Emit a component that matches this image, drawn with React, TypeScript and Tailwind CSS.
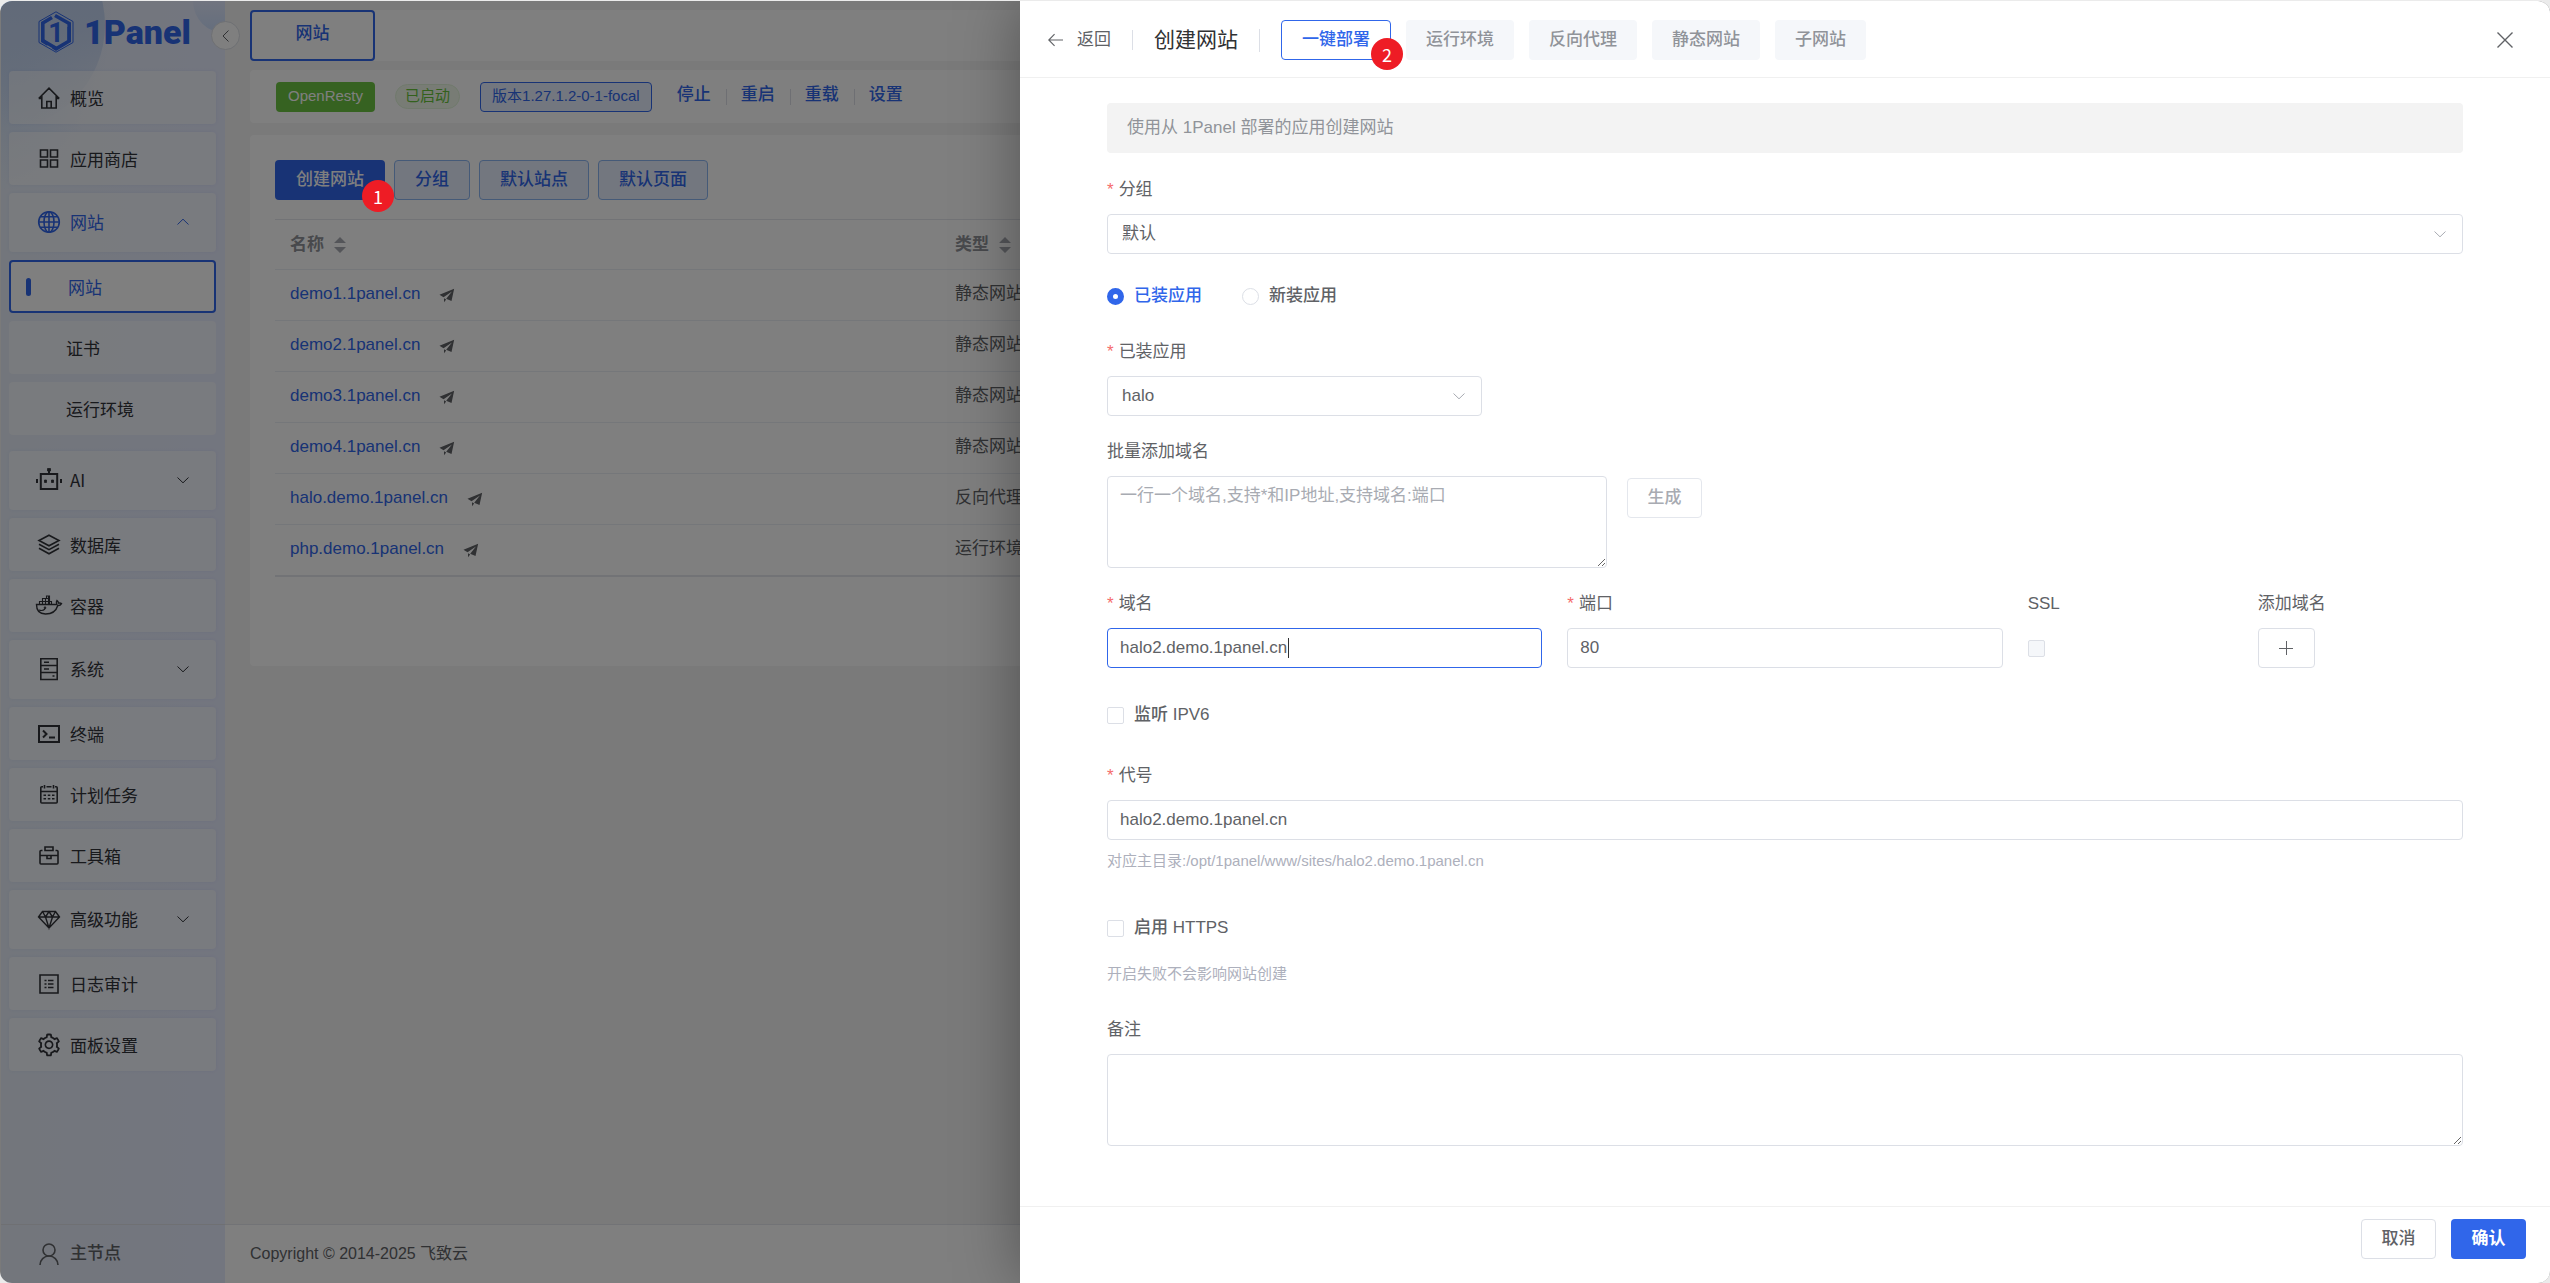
import React from "react";
import { AiOutlineSetting } from "react-icons/ai";

const FONT = "font-['Liberation_Sans','Noto_Sans_CJK_SC',sans-serif]";

function Svg({ children, size = 22, className = "" }: { children: React.ReactNode; size?: number; className?: string }) {
  return (
    <svg
      width={size}
      height={size}
      viewBox="0 0 22 22"
      fill="none"
      stroke="currentColor"
      strokeWidth="1.6"
      className={"shrink-0 overflow-visible " + className}
      aria-hidden="true"
    >
      {children}
    </svg>
  );
}

const icons: Record<string, React.ReactNode> = {
  home: (
    <Svg>
      <path d="M.7 11.5 11 1.2l10.300 10.300M3.800 9v12h14.400V9M.7 11.500h3M18.200 11.500h3M8.800 21v-6.500h4.400V21" />
    </Svg>
  ),
  grid: (
    <Svg>
      <path d="M2.500 2h7v7h-7zM12.500 2h7v7h-7zM2.500 12h7v7h-7zM12.500 12h7v7h-7z" />
    </Svg>
  ),
  globe: (
    <Svg>
      <circle cx="11" cy="11" r="10.300" />
      <ellipse cx="11" cy="11" rx="5" ry="10.300" />
      <path d="M11 .7v20.600M.7 11h20.600M2.300 5.800h17.400M2.300 16.200h17.400" />
    </Svg>
  ),
  robot: (
    <Svg>
      <path d="M2.800 5h16.400v15H2.800zM11 1v4M-1 10v4M23 10v4" strokeWidth="2" />
      <path d="M9.500-.5h3v2.500h-3zM6.500 11h2v2.500h-2zM13.500 11h2v2.500h-2z" fill="currentColor" strokeWidth=".8" />
    </Svg>
  ),
  layers: (
    <Svg>
      <path d="M11 1.200 21 6.500 11 11.800 1 6.500zM1 10.300l10 5.300 10-5.300M1 14.300l10 5.500 10-5.500" />
    </Svg>
  ),
  docker: (
    <Svg>
      <path
        d="M-1.500 9.500h20.300c-.8-1.500-.5-3 .2-4 1 .7 1.400 1.700 1.500 2.700 1-.3 2.200-.2 3 .4-.7 1.300-2 2-3.700 1.900C18 16.500 13.500 19 7.500 19 1 19-1.500 15-1.500 9.500z"
        strokeWidth="1.400"
      />
      <path d="M1.500 9.500v-3h12v3M4.500 9.500v-6h6v6M7.500 9.500v-6M10.500 6.500V1.500M8.500 3.500v-2.500h3v8.500M1 15c2 .8 4.500.5 6-1" strokeWidth="1.100" />
      <circle cx="7" cy="12.800" r=".5" />
    </Svg>
  ),
  server: (
    <Svg>
      <path d="M2.800.7h16.400v20.800H2.800zM2.800 7.500h16.400M2.800 14.500h16.400M6 4.200h5M6 11h5M14.500 18h2" />
    </Svg>
  ),
  terminal: (
    <Svg>
      <path d="M1 3h20v16H1zM5 7.500 8.500 11 5 14.500M11 14.500h6" strokeWidth="2" />
    </Svg>
  ),
  calendar: (
    <Svg>
      <path d="M5 2.700H3.800a1 1 0 0 0-1 1V18a1 1 0 0 0 1 1h14.400a1 1 0 0 0 1-1V3.700a1 1 0 0 0-1-1H17M8.500 2.700h5M6.500 1v3.500M15.500 1v3.500M2.800 7.500h16.400" />
      <path d="M5.500 11.200H8M9.800 11.200h2.500M14 11.200h2.500M5.500 14.700H8M9.800 14.700h2.500M14 14.700h2.500" />
    </Svg>
  ),
  toolbox: (
    <Svg>
      <path d="M4.500 5.500H3a1 1 0 0 0-1 1V18a1 1 0 0 0 1 1h16a1 1 0 0 0 1-1V6.500a1 1 0 0 0-1-1h-1.500M7 5.500V2h8v3.500zM2 10.500h18M9 10.500v3h4v-3" />
    </Svg>
  ),
  diamond: (
    <Svg>
      <path d="M4.500 3.500h13L21.500 9 11 20 .5 9zM.5 9h21M4.500 3.500 7.500 9 11 20l3.500-11 3-5.500M7.500 9 11 3.500 14.500 9" strokeWidth="1.400" />
    </Svg>
  ),
  list: (
    <Svg>
      <path d="M2 2h18v18H2z" />
      <path d="M6.500 7.500h2M10 7.500h5.500M6.500 11h2M10 11h5.500M6.500 14.500h2M10 14.500h5.500" />
    </Svg>
  ),
  gear: <AiOutlineSetting className="size-[26px] shrink-0 -mx-0.5" aria-hidden="true" />,
};

function Chevron({ up = false, className = "" }: { up?: boolean; className?: string }) {
  return (
    <svg width="12" height="8" viewBox="0 0 12 8" fill="none" stroke="currentColor" strokeWidth="1" className={className} aria-hidden="true">
      <path d={up ? "M.5 6.500 6 1.200l5.500 5.300" : "M.5 1.500 6 6.800l5.500-5.300"} />
    </svg>
  );
}

function MenuItem({ icon, label, group, open }: { icon: string; label: string; group?: boolean; open?: boolean }) {
  return (
    <a
      href="#"
      className={
        "flex items-center gap-2.5 rounded bg-white/50 pl-[29px] pr-[27px] shadow-[0_0_4px_rgba(0,60,200,0.06)] " +
        (group ? "h-[59px] pb-0.5 " : "h-[53px] ") +
        (open ? "text-[#3066ea]" : "text-[#303338]")
      }
    >
      {icons[icon]}
      <span className="flex-1">{label}</span>
      {group && <Chevron up={open} />}
    </a>
  );
}

function Logo() {
  return (
    <div className="flex h-[62px] items-center gap-2.5 pl-[37px] text-[#3066ea]">
      <svg width="36" height="42" viewBox="0 0 36 42" fill="none" stroke="currentColor" aria-hidden="true">
        <path d="M18 .8 35 10.500v21L18 41.200 1 31.500v-21z" strokeWidth="1" />
        <path d="M14 6.500 4.800 12v18L10 33.200M15 36l3 1.800L31.200 30V16" strokeWidth="3.600" />
        <path d="M17 4.500 31.200 12.500V30M4.800 29.500 18 37.200" strokeWidth="3.600" />
        <text x="18" y="31" textAnchor="middle" fontSize="27" fontWeight="700" fill="currentColor" stroke="none" fontFamily="Roboto, sans-serif">
          1
        </text>
      </svg>
      <span className="font-[Roboto,sans-serif] text-[34px] leading-none font-black">1Panel</span>
    </div>
  );
}

function Sidebar() {
  return (
    <aside className="relative flex w-56 shrink-0 flex-col bg-linear-to-r from-[#e6edf8] to-[#e7ecff]">
      <div className="pointer-events-none absolute inset-0 overflow-hidden" aria-hidden="true">
        <div className="absolute top-0 left-0 h-48 w-28 bg-radial-[at_0%_0%] from-[#bdd5f5] to-transparent to-70%" />
        <div className="absolute -top-20 -left-26 size-[208px] rounded-full bg-linear-to-b from-[#b9d2f5] via-[#c6d6f2] to-transparent" />
        <div className="absolute -top-8 -right-8 size-16 rounded-full bg-linear-to-b from-[#e7ecff] from-40% to-[#c9dcfb]" />
      </div>
      <button
        type="button"
        aria-label="收起菜单"
        className="absolute top-5 -right-[15px] z-10 flex size-[29px] items-center justify-center rounded-full border border-[#dcdfe6] bg-white text-[#606266]"
      >
        <svg width="8" height="12" viewBox="0 0 8 12" fill="none" stroke="currentColor" aria-hidden="true">
          <path d="M6.500.5 1 6l5.500 5.500" />
        </svg>
      </button>
      <div className="relative">
        <Logo />
      </div>
      <nav className="relative mt-2 flex flex-col gap-2 pr-[9px] pl-2 text-[17px] font-[Noto_Sans_CJK_SC,sans-serif]">
        <MenuItem icon="home" label="概览" />
        <MenuItem icon="grid" label="应用商店" />
        <MenuItem icon="globe" label="网站" group open />
        <div className="mb-2 flex flex-col gap-2">
          <a href="#" className="relative flex h-[53px] items-center rounded border-2 border-[#3066ea] bg-white pl-[57px] text-[#3066ea]">
            <span className="absolute left-[15px] h-[18px] w-[5px] rounded-sm bg-[#3066ea]" />
            网站
          </a>
          <a href="#" className="flex h-[53px] items-center rounded bg-white/50 pl-[57px] text-[#303338]">证书</a>
          <a href="#" className="flex h-[53px] items-center rounded bg-white/50 pl-[57px] text-[#303338]">运行环境</a>
        </div>
        <MenuItem icon="robot" label="AI" group />
        <MenuItem icon="layers" label="数据库" />
        <MenuItem icon="docker" label="容器" />
        <MenuItem icon="server" label="系统" group />
        <MenuItem icon="terminal" label="终端" />
        <MenuItem icon="calendar" label="计划任务" />
        <MenuItem icon="toolbox" label="工具箱" />
        <MenuItem icon="diamond" label="高级功能" group />
        <MenuItem icon="list" label="日志审计" />
        <MenuItem icon="gear" label="面板设置" />
      </nav>
      <button
        type="button"
        className="relative mt-auto flex h-[59px] items-center gap-2.5 border-t border-[#dfe0e6] pl-[37px] text-[17px] font-medium text-[#606266]"
      >
        <Svg>
          <circle cx="11" cy="7" r="6" />
          <path d="M2 22a9 9 0 0 1 18 0" />
        </Svg>
        主节点
      </button>
    </aside>
  );
}

function Badge({ n, className }: { n: number; className: string }) {
  return (
    <span
      className={
        "absolute z-50 flex size-8 items-center justify-center rounded-full bg-[#ee1c25] font-[Noto_Sans_CJK_SC,sans-serif] text-lg leading-none font-normal text-white " +
        className
      }
    >
      {n}
    </span>
  );
}

function SortCaret() {
  return (
    <svg width="12" height="16" viewBox="0 0 12 16" fill="#a8abb2" aria-hidden="true">
      <path d="M6 0l6 6H0zM6 16l6-6H0z" />
    </svg>
  );
}

const sites = [
  ["demo1.1panel.cn", "静态网站"],
  ["demo2.1panel.cn", "静态网站"],
  ["demo3.1panel.cn", "静态网站"],
  ["demo4.1panel.cn", "静态网站"],
  ["halo.demo.1panel.cn", "反向代理"],
  ["php.demo.1panel.cn", "运行环境"],
];

const plainBtn = "h-10 rounded border border-[#8ab4f0] bg-[#e6efff] px-5 font-medium text-[#3066ea]";

function SitePage() {
  return (
    <main className="flex min-w-0 flex-1 flex-col bg-[#f4f4f4] text-[17px]">
      <div className="flex flex-col px-[25px] pt-[9px]">
        <div className="flex h-[51px] rounded bg-white">
          <button type="button" className="w-[125px] rounded border-2 border-[#3066ea] pb-1 font-medium text-[#3066ea]">
            网站
          </button>
        </div>

        <section className="mt-[9px] flex h-[53px] items-center rounded bg-white pl-[26px]">
          <span className="flex h-[30px] items-center rounded bg-[#6cc442] px-3 text-[15px] text-white">OpenResty</span>
          <span className="ml-5 flex h-[25px] items-center rounded-full border border-[#e1f3d8] bg-[#f0f9eb] px-[9px] text-[15px] text-[#67c23a]">
            已启动
          </span>
          <span className="ml-5 flex h-[30px] items-center rounded border border-[#3066ea] bg-[#e6efff] px-[11px] text-[15px] text-[#3066ea]">
            版本1.27.1.2-0-1-focal
          </span>
          <div className="ml-[25px] flex items-center font-medium text-[#3066ea]">
            {["停止", "重启", "重载", "设置"].map((t, i) => (
              <React.Fragment key={t}>
                {i > 0 && <span className="mr-3.5 ml-[15px] h-4 w-px bg-[#dcdfe6]" />}
                <button type="button" className="pb-1">{t}</button>
              </React.Fragment>
            ))}
          </div>
        </section>

        <section className="mt-3 rounded bg-white px-[25px] pt-[25px] pb-[89px]">
          <div className="flex gap-[9px]">
            <div className="relative">
              <button type="button" className="h-10 rounded bg-[#3066ea] px-[21px] font-medium text-white">
                创建网站
              </button>
              <Badge n={1} className="-right-[9px] -bottom-3" />
            </div>
            <button type="button" className={plainBtn}>分组</button>
            <button type="button" className={plainBtn}>默认站点</button>
            <button type="button" className={plainBtn}>默认页面</button>
          </div>
          <table className="mt-[19px] w-full border-collapse border-t border-b-2 border-[#e4e7ed] text-left">
            <thead>
              <tr className="h-[50px] border-b border-[#ebeef5] text-[#909399]">
                <th className="w-[665px] px-[15px]">
                  <span className="flex items-center gap-2.5">名称 <SortCaret /></span>
                </th>
                <th className="px-[15px]">
                  <span className="flex items-center gap-2.5">类型 <SortCaret /></span>
                </th>
              </tr>
            </thead>
            <tbody>
              {sites.map(([name, type]) => (
                <tr key={name} className="h-[51px] border-b border-[#ebeef5] text-[#606266]">
                  <td className="px-[15px] pb-0.5">
                    <span className="flex items-center gap-[19px]">
                      <a href="#" className="text-[#3066ea]">{name}</a>
                      <svg width="16" height="16" viewBox="0 0 1024 1024" fill="currentColor" aria-hidden="true" className="mt-0.5">
                        <path d="M30 500 970 110 800 900 460 750 830 280 290 650zM320 720V970L460 800z" />
                      </svg>
                    </span>
                  </td>
                  <td className="px-[15px] pb-0.5">{type}</td>
                </tr>
              ))}
            </tbody>
          </table>
        </section>
      </div>
      <footer className="mt-auto flex h-[59px] items-center border-t border-[#e4e7ed] bg-white pl-[25px] text-base text-[#606266]">
        Copyright © 2014-2025 飞致云
      </footer>
    </main>
  );
}

function Label({ children, required, htmlFor }: { children: React.ReactNode; required?: boolean; htmlFor?: string }) {
  return (
    <label htmlFor={htmlFor} className="mb-2.5 flex h-7 items-center text-[#606266]">
      {required && <span className="mr-[5px] text-[#f56c6c]">*</span>}
      {children}
    </label>
  );
}

const field = "block h-10 w-full rounded border border-[#dcdfe6] bg-white px-3 text-[#606266] outline-none";
const box = "size-[17px] shrink-0 appearance-none rounded-[2px] border border-[#dcdfe6] bg-white";

function Select({ id, value, className = "" }: { id: string; value: string; className?: string }) {
  return (
    <div className={"relative " + className}>
      <select id={id} defaultValue={value} className="h-10 w-full appearance-none rounded border border-[#dcdfe6] bg-white px-3.5 text-[#606266] outline-none">
        <option>{value}</option>
      </select>
      <Chevron className="pointer-events-none absolute top-4 right-[17px] text-[#a8abb2]" />
    </div>
  );
}

function Radio({ label, checked }: { label: string; checked?: boolean }) {
  return (
    <label className={"flex items-center gap-2.5 font-medium " + (checked ? "text-[#3066ea]" : "text-[#606266]")}>
      <input
        type="radio"
        name="appSource"
        defaultChecked={checked}
        className="size-[17px] appearance-none rounded-full border border-[#dcdfe6] bg-white checked:border-[6px] checked:border-[#3066ea]"
      />
      {label}
    </label>
  );
}

const tabs = ["运行环境", "反向代理", "静态网站", "子网站"];

function Drawer() {
  return (
    <div
      role="dialog"
      aria-label="创建网站"
      className="flex w-3/5 flex-col bg-white text-[17px] text-[#606266] shadow-[0_0_60px_rgba(0,0,0,0.35)]"
    >
      <header className="flex h-[77px] shrink-0 items-center border-b border-[#f0f0f0] pt-0.5 pr-[37px] pl-7">
        <button type="button" className="flex items-center gap-3.5">
          <svg width="15" height="14" viewBox="0 0 16 14" fill="none" stroke="currentColor" strokeWidth="1.200" aria-hidden="true">
            <path d="M7 .8.8 7 7 13.200M1 7h15" />
          </svg>
          返回
        </button>
        <span className="mx-[21px] h-5 w-px bg-[#dcdfe6]" />
        <h2 className="text-[21px] text-[#303133]">创建网站</h2>
        <span className="mx-[21px] h-[23px] w-px bg-[#dcdfe6]" />
        <div className="flex gap-[15px]">
          <div className="relative">
            <button type="button" className="h-10 rounded border border-[#3066ea] bg-white px-5 font-medium text-[#3066ea]">
              一键部署
            </button>
            <Badge n={2} className="-right-3 -bottom-[10px]" />
          </div>
          {tabs.map((t) => (
            <button key={t} type="button" className="h-10 rounded bg-[#f5f7fa] px-5 font-medium text-[#909399]">
              {t}
            </button>
          ))}
        </div>
        <button type="button" aria-label="关闭" className="ml-auto">
          <svg width="16" height="16" viewBox="0 0 16 16" fill="none" stroke="currentColor" strokeWidth="1.400" aria-hidden="true">
            <path d="M.5.5l15 15M15.500.5l-15 15" />
          </svg>
        </button>
      </header>

      <form className="min-h-0 flex-1 overflow-hidden px-[87px] pt-[25px]">
        <p className="flex h-[50px] items-center rounded bg-[#f3f3f3] px-5 text-[#909399]">使用从 1Panel 部署的应用创建网站</p>

        <div className="mt-[23px]">
          <Label required htmlFor="group">分组</Label>
          <Select id="group" value="默认" />
        </div>

        <div className="mt-[22px] flex h-10 items-center gap-10">
          <Radio label="已装应用" checked />
          <Radio label="新装应用" />
        </div>

        <div className="mt-[22px]">
          <Label required htmlFor="app">已装应用</Label>
          <Select id="app" value="halo" className="w-[375px]" />
        </div>

        <div className="mt-[22px]">
          <Label htmlFor="batch">批量添加域名</Label>
          <div className="flex items-start gap-5">
            <textarea
              id="batch"
              placeholder="一行一个域名,支持*和IP地址,支持域名:端口"
              className="block h-[92px] w-[500px] resize rounded border border-[#dcdfe6] px-3 py-1.5 leading-[26px] outline-none placeholder:text-[#a8abb2]"
            />
            <button type="button" className="mt-0.5 h-10 w-[75px] rounded border border-[#e4e7ed] bg-white font-medium text-[#a8abb2]">
              生成
            </button>
          </div>
        </div>

        <div className="mt-[22px] grid grid-cols-6 gap-[25px]">
          <div className="col-span-2">
            <Label required htmlFor="domain">域名</Label>
            <div className="relative">
              <input id="domain" defaultValue="halo2.demo.1panel.cn" className="block h-10 w-full rounded border border-[#3066ea] bg-white px-3 text-[#606266] outline-none" />
              <span className="absolute top-2.5 left-[181px] h-5 w-px bg-[#303133]" />
            </div>
          </div>
          <div className="col-span-2">
            <Label required htmlFor="port">端口</Label>
            <input id="port" defaultValue="80" className={field} />
          </div>
          <div>
            <Label htmlFor="ssl">SSL</Label>
            <div className="flex h-10 items-center">
              <input id="ssl" type="checkbox" disabled className="size-[17px] appearance-none rounded-[2px] border border-[#dcdfe6] bg-[#f5f7fa]" />
            </div>
          </div>
          <div>
            <Label>添加域名</Label>
            <button type="button" aria-label="添加域名" className="flex h-10 w-[57px] items-center justify-center rounded border border-[#dcdfe6] bg-white">
              <svg width="14" height="14" viewBox="0 0 14 14" stroke="currentColor" strokeWidth="1" aria-hidden="true">
                <path d="M7.500 0v14M0 7.500h14" />
              </svg>
            </button>
          </div>
        </div>

        <label className="mt-[27px] flex h-10 items-center gap-2.5 font-medium">
          <input type="checkbox" className={box} />
          监听 IPV6
        </label>

        <div className="mt-[27px]">
          <Label required htmlFor="alias">代号</Label>
          <input id="alias" defaultValue="halo2.demo.1panel.cn" className={field} />
          <p className="mt-[9px] h-6 text-[15px] leading-6 text-[#adb0bc]">对应主目录:/opt/1panel/www/sites/halo2.demo.1panel.cn</p>
        </div>

        <label className="mt-[35px] flex h-10 items-center gap-2.5 font-medium">
          <input type="checkbox" className={box} />
          启用 HTTPS
        </label>
        <p className="mt-3.5 h-6 text-[15px] leading-6 text-[#adb0bc]">开启失败不会影响网站创建</p>

        <div className="mt-[30px]">
          <Label htmlFor="remark">备注</Label>
          <textarea id="remark" className="block h-[92px] w-full resize rounded border border-[#dcdfe6] px-3 py-1.5 outline-none" />
        </div>
      </form>

      <footer className="flex h-[77px] shrink-0 items-start justify-end gap-[15px] border-t border-[#f0f0f0] pt-3 pr-6">
        <button type="button" className="h-10 w-[75px] rounded border border-[#dcdfe6] bg-white font-medium">取消</button>
        <button type="button" className="h-10 w-[75px] rounded bg-[#3066ea] font-bold text-white">确认</button>
      </footer>
    </div>
  );
}

export default function App() {
  return (
    <div className={"h-screen bg-[#ebebeb] pt-px " + FONT}>
      <div className="relative flex h-full overflow-hidden rounded-xl bg-[#f4f4f4] pl-px">
        <Sidebar />
        <SitePage />
        <div className="absolute inset-0 z-40 flex justify-end bg-black/50">
          <Drawer />
        </div>
      </div>
    </div>
  );
}
